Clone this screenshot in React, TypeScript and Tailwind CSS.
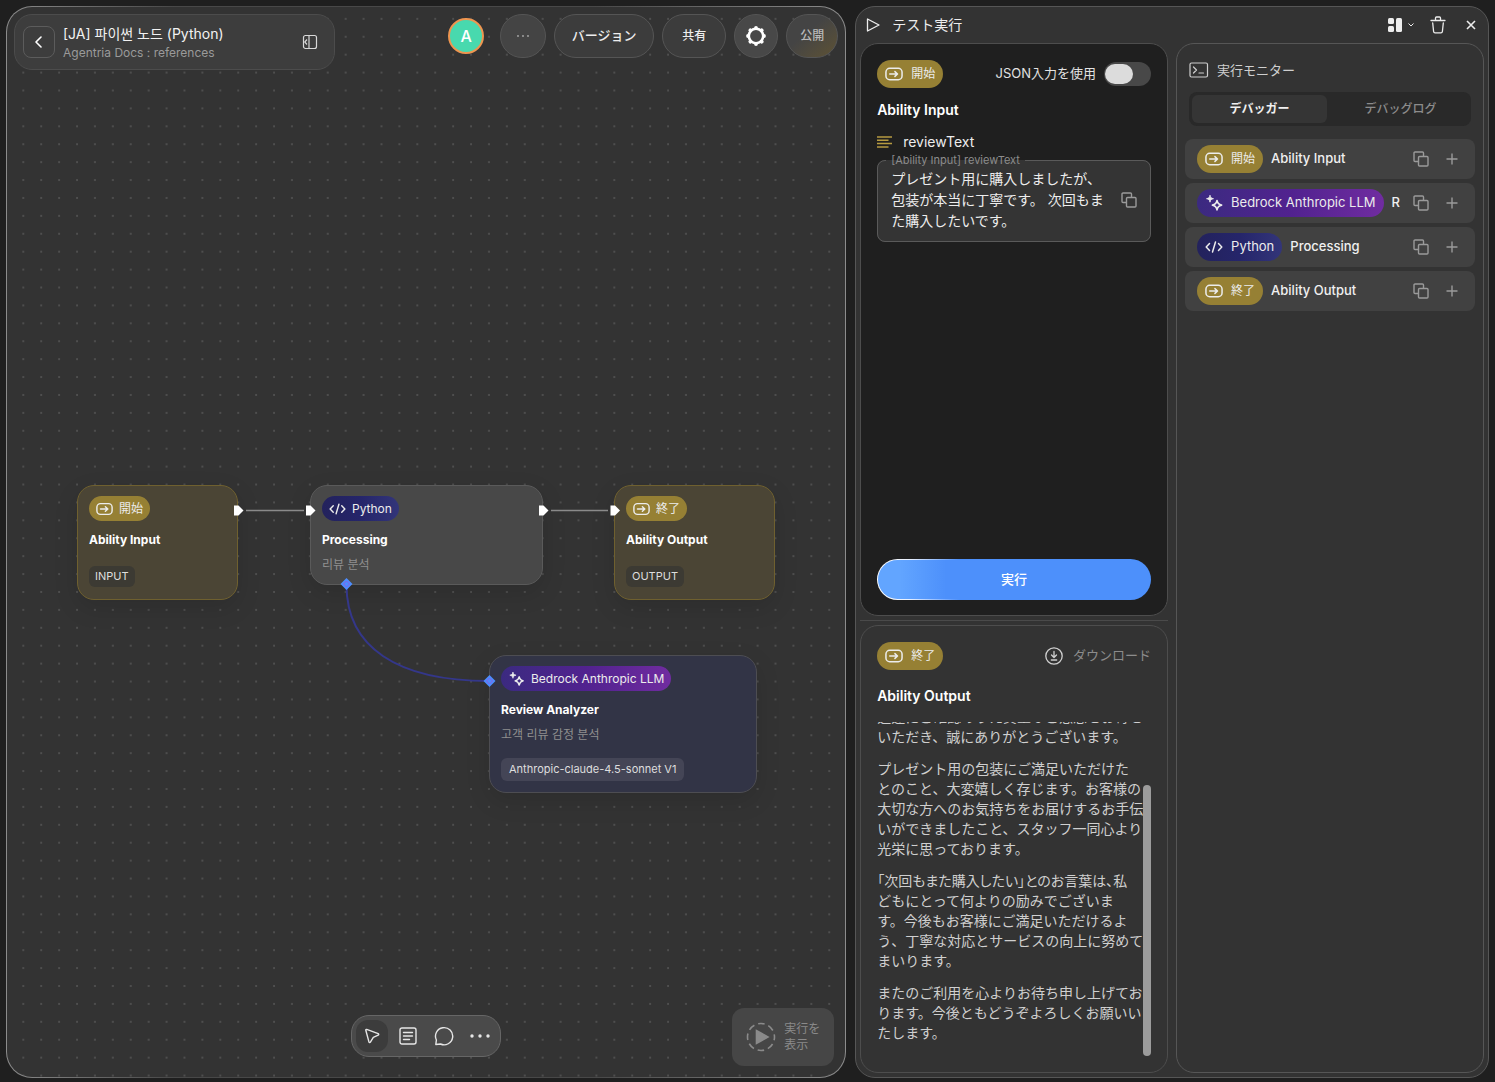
import { useState } from 'react'
import type { ReactNode } from 'react'

const ICON = 'fill-none stroke-current'

function EnterIcon({ className }: { className: string }) {
  return (
    <svg viewBox="0 0 19 14" className={`${ICON} ${className}`} strokeWidth="1.6" strokeLinecap="round" strokeLinejoin="round">
      <rect x="1" y="1" width="17" height="12" rx="4" />
      <path d="M5 7h8M10.5 4.5 13.2 7l-2.7 2.5" />
    </svg>
  )
}

function SparkIcon({ className }: { className: string }) {
  return (
    <svg viewBox="0 0 18 18" className={`${ICON} ${className}`} strokeWidth="1.6" strokeLinejoin="round">
      <path d="M12 6.5c.6 3 1.6 4 4.6 4.6-3 .6-4 1.6-4.6 4.8-.6-3.2-1.6-4.2-4.6-4.8 3-.6 4-1.6 4.6-4.6z" />
      <path d="M5 1.2c.4 2.3 1.2 3.1 3.5 3.5C6.2 5.1 5.4 5.9 5 8.2 4.6 5.9 3.8 5.1 1.5 4.7 3.8 4.3 4.6 3.5 5 1.2z" fill="currentColor" strokeWidth=".8" />
    </svg>
  )
}

function CodeIcon({ className }: { className: string }) {
  return (
    <svg viewBox="0 0 18 14" className={`${ICON} ${className}`} strokeWidth="1.5" strokeLinecap="round" strokeLinejoin="round">
      <path d="M4.5 3.5 1.2 7l3.3 3.5M13.5 3.5 16.8 7l-3.3 3.5M10.5 2 7.5 12" />
    </svg>
  )
}

function CopyIcon() {
  return (
    <svg viewBox="0 0 16 16" className={`${ICON} size-4`} strokeWidth="1.4" strokeLinejoin="round">
      <rect x="5.5" y="5.5" width="9.5" height="9.5" rx="1" />
      <path d="M5.5 10.5H2a1 1 0 0 1-1-1V2a1 1 0 0 1 1-1h7.5a1 1 0 0 1 1 1v3.5" />
    </svg>
  )
}

function GearIcon() {
  return (
    <svg viewBox="0 0 20 20" className="size-5 fill-current">
      <circle cx="10" cy="10" r="7.2" fill="none" stroke="currentColor" strokeWidth="2.6" />
      {[0, 45, 90, 135, 180, 225, 270, 315].map((angle) => (
        <circle key={angle} cx="10" cy="2" r="1.9" transform={`rotate(${angle} 10 10)`} />
      ))}
    </svg>
  )
}

type Kind = 'start' | 'end' | 'llm' | 'python'

const BADGES: Record<Kind, { label: string; color: string; size: string }> = {
  start: { label: '開始', color: 'bg-[#968034]', size: 'text-[12px]' },
  end: { label: '終了', color: 'bg-[#968034]', size: 'text-[12px]' },
  llm: { label: 'Bedrock Anthropic LLM', color: 'bg-linear-to-r from-[#3b2a80] via-[#51228f] to-[#702ca0]', size: 'text-[13px]' },
  python: { label: 'Python', color: 'bg-linear-to-r from-[#23225c] via-[#25256a] to-[#333579]', size: 'text-[13px]' },
}

function Badge({ kind, small = false }: { kind: Kind; small?: boolean }) {
  const { label, color, size } = BADGES[kind]
  const icon = small ? 'w-[17px] h-4 shrink-0' : 'w-[18px] h-[18px] shrink-0'
  return (
    <span
      className={`inline-flex shrink-0 items-center rounded-full whitespace-nowrap text-[#ececec] ${color} ${
        small ? 'h-[25px] gap-1.5 px-[7px] text-[12px]' : `h-7 gap-2 px-2 ${size}`
      }`}
    >
      {kind === 'llm' && <SparkIcon className={icon} />}
      {kind === 'python' && <CodeIcon className={icon} />}
      {(kind === 'start' || kind === 'end') && <EnterIcon className={icon} />}
      {label}
    </span>
  )
}

interface FlowNodeProps {
  kind: Kind
  title: string
  className: string
  desc?: string
  children?: ReactNode
}

function FlowNode({ kind, title, className, desc, children }: FlowNodeProps) {
  return (
    <article className={`absolute flex flex-col items-start rounded-[17px] border px-[11px] py-2.5 shadow-[0_8px_24px_rgba(0,0,0,0.12)] ${className}`}>
      <Badge kind={kind} small />
      <h3 className="mt-2.5 text-[12px] leading-[18px] font-bold text-white">{title}</h3>
      {desc && <p className="mt-2 text-[12px] leading-4 text-[#8f8f8f]">{desc}</p>}
      {children}
    </article>
  )
}

function Canvas() {
  return (
    <main className="relative flex min-w-0 flex-col justify-between overflow-hidden rounded-[26px] border border-transparent p-[7px] [background:linear-gradient(#333,#333)_padding-box,linear-gradient(to_right,#8c8c8c,#484848_20%,#484848_70%,#8c8c8c)_border-box]">
      <svg className="absolute inset-0 size-full" aria-hidden="true">
        <defs>
          <pattern id="dots" x="7.3" y="2.9" width="17.91" height="17.91" patternUnits="userSpaceOnUse">
            <circle cx="9" cy="9" r=".7" fill="#777" />
          </pattern>
        </defs>
        <rect width="100%" height="100%" fill="url(#dots)" />
      </svg>

      <div className="relative z-10 flex items-start justify-between">
        <header className="flex h-14 w-[321px] items-center rounded-[18px] border border-[#4c4c4c] bg-[#3d3d3d] pl-2">
          <button aria-label="戻る" className="flex size-8 items-center justify-center rounded-lg border border-[#5c5c5c] text-white">
            <svg viewBox="0 0 12 12" className={`${ICON} size-3`} strokeWidth="1.6" strokeLinecap="round" strokeLinejoin="round">
              <path d="M8 1 3 6l5 5" />
            </svg>
          </button>
          <div className="ml-2 flex-1 pt-0.5">
            <h1 className="text-[14px] leading-5 text-[#f2f2f2]">[JA] 파이썬 노드 (Python)</h1>
            <p className="text-[12px] leading-[18px] text-[#9a9a9a]">Agentria Docs : references</p>
          </div>
          <button aria-label="サイドバー" className="mr-4 text-[#d8d8d8]">
            <svg viewBox="0 0 16 16" className={`${ICON} size-4`} strokeWidth="1.2">
              <rect x="1.5" y="1.5" width="13" height="13" rx="2" />
              <path d="M7 1.5v13M5 5.500 2.800 8 5 10.500" />
            </svg>
          </button>
        </header>

        <div className="flex items-center gap-2 text-[13px] font-medium text-[#ededed]">
          <span className="mr-2 flex size-9 items-center justify-center rounded-full border-2 border-[#ee9550] bg-[#48d9ae] text-[16px] text-white">A</span>
          <button aria-label="その他" className="flex h-11 w-[46px] items-center justify-center rounded-full border border-[#555] bg-[#444] text-[#aaa]">
            <svg viewBox="0 0 14 4" className="w-3.5 fill-current"><circle cx="2" cy="2" r=".9" /><circle cx="7" cy="2" r=".9" /><circle cx="12" cy="2" r=".9" /></svg>
          </button>
          <button className="h-11 w-[100px] rounded-full border border-[#555] bg-[#3c3c3c]">バージョン</button>
          <button className="h-11 w-16 rounded-full border border-[#555] bg-[#3c3c3c] text-[12px]">共有</button>
          <button aria-label="設定" className="flex size-11 items-center justify-center rounded-full border border-[#555] bg-[#484848] text-white">
            <GearIcon />
          </button>
          <button className="h-11 w-[52px] rounded-full border border-[#555] bg-linear-to-br from-[#444] from-40% to-[#5e5233] text-[12px] text-[#b9b9b9]">公開</button>
        </div>
      </div>

      <FlowNode kind="start" title="Ability Input" className="top-[478px] left-[70px] h-[115px] w-[161px] border-[#6f602f] bg-[#4b4535]">
        <span className="mt-[17px] rounded-md bg-[#3c3a33] px-1.5 text-[11px] leading-[21px] text-[#dedede]">INPUT</span>
      </FlowNode>
      <FlowNode kind="python" title="Processing" desc="리뷰 분석" className="top-[478px] left-[303px] h-[100px] w-[233px] border-[#5a5a5a] bg-[#484848]" />
      <FlowNode kind="end" title="Ability Output" className="top-[478px] left-[607px] h-[115px] w-[161px] border-[#6f602f] bg-[#4b4535]">
        <span className="mt-[17px] rounded-md bg-[#3c3a33] px-1.5 text-[11px] leading-[21px] text-[#dedede]">OUTPUT</span>
      </FlowNode>
      <FlowNode kind="llm" title="Review Analyzer" desc="고객 리뷰 감정 분석" className="top-[648px] left-[482px] h-[138px] w-[268px] border-[#4d4d52] bg-[#323446]">
        <span className="mt-[15px] rounded-md bg-[#444556] px-2 text-[11px] leading-[23px] text-[#dedede]">Anthropic-claude-4.5-sonnet V1</span>
      </FlowNode>

      {/* edges and ports, in canvas coordinates */}
      <svg className="pointer-events-none absolute inset-0 size-full" aria-hidden="true">
        <g stroke="#8a8a8a" strokeWidth="1.5">
          <path d="M239 503.500h58M544 503.500h57" />
        </g>
        <path d="M339.500 578C339.500 640 390 674 482 674" fill="none" stroke="#34378a" strokeWidth="2" />
        <g fill="#fff">
          <path d="M227 498.500h4.500l5 5-5 5H227z" />
          <path d="M299 498.500h4.500l5 5-5 5H299z" />
          <path d="M532 498.500h4.500l5 5-5 5H532z" />
          <path d="M603.500 498.500h4.500l5 5-5 5h-4.500z" />
        </g>
        <g fill="#4c8dff">
          <path d="m339.500 571 6 6-6 6-6-6z" />
          <path d="m482.500 668 6 6-6 6-6-6z" />
        </g>
        <g fill="none" stroke="#8a5fe0" strokeWidth="1">
          <path d="m339.500 574 3 3-3 3-3-3z" />
          <path d="m482.500 671 3 3-3 3-3-3z" />
        </g>
      </svg>

      <div className="relative z-10 grid grid-cols-[1fr_auto_1fr] pb-1">
        <nav aria-label="ツール" className="col-start-2 mt-[7px] flex h-[42px] items-center gap-1 rounded-[18px] border border-[#666] bg-[#4a4a4a] px-1 text-[#e6e6e6]">
          <button aria-label="選択" className="flex size-8 items-center justify-center rounded-xl bg-[#3c3c3c]">
            <svg viewBox="0 0 16 16" className={`${ICON} size-4`} strokeWidth="1.4" strokeLinejoin="round">
              <path d="M1.800 2.200c-.2-.6.300-1 .9-.8l11.500 4.300c.7.300.7 1.100 0 1.400L9.300 9.300l-2.900 4.900c-.4.600-1.200.5-1.400-.1z" />
            </svg>
          </button>
          <button aria-label="メモ" className="flex size-8 items-center justify-center">
            <svg viewBox="0 0 18 18" className={`${ICON} size-[18px]`} strokeWidth="1.4" strokeLinecap="round">
              <rect x="1" y="1" width="16" height="16" rx="2" />
              <path d="M4.500 5.500h9M4.500 9h9M4.500 12.500h6" />
            </svg>
          </button>
          <button aria-label="コメント" className="flex size-8 items-center justify-center">
            <svg viewBox="0 0 20 20" className={`${ICON} size-5`} strokeWidth="1.4" strokeLinejoin="round">
              <path d="M1.800 18.500l.6-4.500A8.600 8.600 0 1 1 6.500 18z" />
            </svg>
          </button>
          <button aria-label="その他のツール" className="flex size-8 items-center justify-center">
            <svg viewBox="0 0 20 4" className="w-5 fill-current"><circle cx="2" cy="2" r="1.7" /><circle cx="10" cy="2" r="1.7" /><circle cx="18" cy="2" r="1.7" /></svg>
          </button>
        </nav>
        <button className="mr-1 flex h-[58px] w-[102px] items-center gap-2 justify-self-end rounded-xl bg-[#464646] pl-[14px] text-left text-[12px] leading-4 text-[#8a8a8a]">
          <svg viewBox="0 0 30 30" className={`${ICON} size-[30px] shrink-0`} strokeWidth="1.6">
            <circle cx="15" cy="15" r="13.500" strokeDasharray="6.600 4" strokeDashoffset="3.300" />
            <path d="M10.500 8.500v13L22 15z" fill="currentColor" />
          </svg>
          <span>実行を<br />表示</span>
        </button>
      </div>
    </main>
  )
}

function InputPanel() {
  const [useJson, setUseJson] = useState(false)
  const [text, setText] = useState('プレゼント用に購入しましたが、\n包装が本当に丁寧です。 次回もま\nた購入したいです。')

  return (
    <section className="flex h-[573px] shrink-0 flex-col rounded-[18px] border border-[#4d4d4d] bg-[#1f1f1f] p-4 pb-[15px]">
      <div className="flex items-center justify-between">
        <Badge kind="start" />
        <label className="flex items-center gap-2 text-[13px] text-[#e2e2e2]">
          JSON入力を使用
          <input
            type="checkbox"
            checked={useJson}
            onChange={(e) => setUseJson(e.target.checked)}
            className="flex h-6 w-[47px] appearance-none items-center rounded-full bg-[#484848] px-px before:h-5 before:w-7 before:rounded-full before:bg-[#dcdcdc] checked:justify-end"
          />
        </label>
      </div>
      <h2 className="mt-3 text-[14px] leading-5 font-semibold text-white">Ability Input</h2>
      <div className="mt-3 flex items-center gap-2.5 text-[14px] leading-5 text-[#ededed]">
        <svg viewBox="0 0 16 12" className="w-4 fill-none stroke-[#b79b41]" strokeWidth="1.5">
          <path d="M0 1h15M0 4.300h11.500M0 7.600h15M0 10.900h11.500" />
        </svg>
        reviewText
      </div>
      <fieldset className="flex h-[90px] items-center rounded-lg border border-[#5a5a5a] bg-[#343434] pr-[13px] pl-2">
        <legend className="px-[5px] text-[11px] leading-4 text-[#8c8c8c]">
          <label htmlFor="review">[Ability Input] reviewText</label>
        </legend>
        <textarea
          id="review"
          rows={3}
          value={text}
          onChange={(e) => setText(e.target.value)}
          className="block min-w-0 flex-1 resize-none overflow-hidden pl-[5px] text-[14px] leading-[21px] whitespace-pre text-[#ededed] outline-none"
        />
        <button aria-label="コピー" className="text-[#9a9a9a]"><CopyIcon /></button>
      </fieldset>
      <button className="mt-auto h-[41px] rounded-full border border-transparent text-[13px] font-medium text-white [background:linear-gradient(to_right,#62a5ff_8%,#4d90fb_25%)_padding-box,linear-gradient(to_right,#fff,#e8f0ff_12%,#4d90fb_30%)_border-box]">
        実行
      </button>
    </section>
  )
}

const REPLY = [
  ['迅速にご確認のうえ貴重なご感想をお寄せ', 'いただき、誠にありがとうございます。'],
  [
    'プレゼント用の包装にご満足いただけた',
    'とのこと、大変嬉しく存じます。お客様の',
    '大切な方へのお気持ちをお届けするお手伝',
    'いができましたこと、スタッフ一同心より',
    '光栄に思っております。',
  ],
  [
    '「次回もまた購入したい」とのお言葉は、私',
    'どもにとって何よりの励みでございま',
    'す。今後もお客様にご満足いただけるよ',
    'う、丁寧な対応とサービスの向上に努めて',
    'まいります。',
  ],
  ['またのご利用を心よりお待ち申し上げてお', 'ります。今後ともどうぞよろしくお願いい', 'たします。'],
]

function OutputPanel() {
  return (
    <section className="flex min-h-0 flex-1 flex-col rounded-[18px] border border-[#4d4d4d] p-4">
      <div className="flex items-center justify-between">
        <Badge kind="end" />
        <button className="flex items-center gap-2.5 text-[13px] text-[#8c8c8c]">
          <svg viewBox="0 0 18 18" className={`${ICON} size-[18px] text-[#d0d0d0]`} strokeWidth="1.3" strokeLinecap="round" strokeLinejoin="round">
            <circle cx="9" cy="9" r="8.2" />
            <path d="M9 4.500v5.700M6.500 8 9 10.500 11.500 8M6.300 13h5.400" />
          </svg>
          ダウンロード
        </button>
      </div>
      <h2 className="mt-4 text-[14px] leading-5 font-semibold text-white">Ability Output</h2>
      {/* scrolled to the end, so the first paragraph is cut by the top edge */}
      <div className="relative mt-4 flex min-h-0 flex-1 flex-col justify-end gap-3 overflow-hidden pb-[13px] text-[14px] leading-5 text-[#cfcfcf]">
        {REPLY.map((lines) => (
          <p key={lines[0]} className="shrink-0 whitespace-nowrap">
            {lines.map((line) => (
              <span key={line} className={line.startsWith('「') ? "block [font-feature-settings:'palt']" : 'block'}>{line}</span>
            ))}
          </p>
        ))}
        <div className="absolute right-0 bottom-0 h-[271px] w-2 rounded-full bg-[#9c9c9c]" />
      </div>
    </section>
  )
}

const STEPS: { kind: Kind; name: string }[] = [
  { kind: 'start', name: 'Ability Input' },
  { kind: 'llm', name: 'R' },
  { kind: 'python', name: 'Processing' },
  { kind: 'end', name: 'Ability Output' },
]

function MonitorPanel() {
  return (
    <section className="min-w-0 rounded-[18px] border border-[#565656] px-2 pt-4">
      <h2 className="flex items-center gap-2 px-1 text-[13px] leading-5 text-[#cfcfcf]">
        <svg viewBox="0 0 20 16" className={`${ICON} h-4 w-5`} strokeWidth="1.2" strokeLinecap="round" strokeLinejoin="round">
          <rect x="1" y="1" width="17.5" height="14" rx="1.5" />
          <path d="M4.500 5 7.500 8l-3 3M10 11h4.500" />
        </svg>
        実行モニター
      </h2>
      <div role="tablist" className="mx-1 mt-3 flex h-[34px] gap-1.5 rounded-lg bg-[#292929] p-[3px] text-[12px]">
        <button role="tab" aria-selected="true" className="flex-1 rounded-md bg-[#353535] font-bold text-[#f0f0f0]">デバッガー</button>
        <button role="tab" aria-selected="false" className="flex-1 font-medium text-[#8c8c8c]">デバッグログ</button>
      </div>
      <ul className="mt-[13px] flex flex-col gap-1">
        {STEPS.map((step) => (
          <li key={step.kind} className="flex h-10 items-center gap-2 rounded-lg bg-[#414141] pr-4 pl-3 text-[13px] text-[#f0f0f0]">
            <Badge kind={step.kind} />
            <span className="min-w-0 flex-1 font-medium whitespace-nowrap">{step.name}</span>
            <button aria-label="コピー" className="mr-2 text-[#9a9a9a]"><CopyIcon /></button>
            <button aria-label="展開" className="text-[#9a9a9a]">
              <svg viewBox="0 0 14 14" className={`${ICON} size-3.5`} strokeWidth="1.4"><path d="M7 1.500v11M1.500 7h11" /></svg>
            </button>
          </li>
        ))}
      </ul>
    </section>
  )
}

function TestRun() {
  return (
    <aside className="flex min-h-0 min-w-0 flex-col rounded-[20px] border border-[#565656] bg-[#333] px-1 pb-1">
      <div className="flex h-9 items-center pr-2 pl-1.5 text-[#ededed]">
        <svg viewBox="0 0 14 14" className={`${ICON} size-3.5`} strokeWidth="1.3" strokeLinejoin="round">
          <path d="M1.500 1v12L13 7z" />
        </svg>
        <h2 className="ml-3 flex-1 pb-0.5 text-[14px]">テスト実行</h2>
        <button aria-label="レイアウト" className="flex items-center gap-1.5">
          <svg viewBox="0 0 14 14" className="size-3.5 fill-current">
            <rect width="6" height="6" rx="1.5" />
            <rect y="8" width="6" height="6" rx="1.5" />
            <rect x="8" width="6" height="14" rx="1.5" />
          </svg>
          <svg viewBox="0 0 6 4" className={`${ICON} w-1.5`} strokeWidth="1"><path d="m.5.500L3 3 5.500.500" /></svg>
        </button>
        <button aria-label="削除" className="ml-4">
          <svg viewBox="0 0 16 18" className={`${ICON} h-[18px] w-4`} strokeWidth="1.3" strokeLinecap="round" strokeLinejoin="round">
            <path d="M1 4.500h14M5.500 4.200V2a1 1 0 0 1 1-1h3a1 1 0 0 1 1 1v2.200M2.700 7l.9 8.500a1.500 1.500 0 0 0 1.500 1.300h5.800a1.500 1.500 0 0 0 1.500-1.300L13.300 7" />
          </svg>
        </button>
        <button aria-label="閉じる" className="ml-5">
          <svg viewBox="0 0 10 10" className={`${ICON} size-2.5`} strokeWidth="1.6"><path d="m1 1 8 8M9 1 1 9" /></svg>
        </button>
      </div>
      <div className="grid min-h-0 flex-1 grid-cols-2 grid-rows-[minmax(0,1fr)] gap-2">
        <div className="flex min-h-0 min-w-0 flex-col">
          <InputPanel />
          <hr className="my-1 border-[#4a4a4a]" />
          <OutputPanel />
        </div>
        <MonitorPanel />
      </div>
    </aside>
  )
}

export default function App() {
  return (
    <div className="grid h-screen min-h-[900px] grid-cols-[57fr_43fr] grid-rows-[minmax(0,1fr)] gap-[9px] bg-[#1f1f1f] px-1.5 pt-1.5 pb-1 font-[Inter,'Noto_Sans_CJK_JP','Noto_Sans_CJK_KR',sans-serif]">
      <Canvas />
      <TestRun />
    </div>
  )
}
